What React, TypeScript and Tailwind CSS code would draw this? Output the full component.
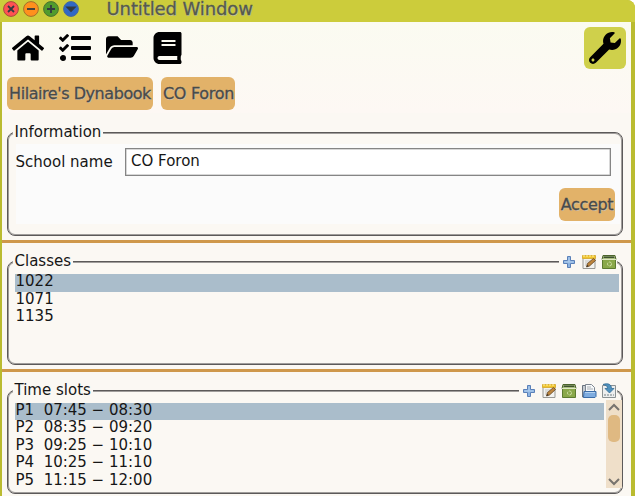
import type { ReactNode } from "react";
import { FaBook, FaFolderOpen, FaHome, FaTasks, FaWrench } from "react-icons/fa";

function Plus() {
  return (
    <svg width="16" height="16" viewBox="0 0 16 16">
      <path d="M6.5 2.5h3v4h4v3h-4v4h-3v-4h-4v-3h4z" fill="#8db4e2" stroke="#5a80b8" />
      <path d="M7.5 3.5h1v4h4v1h-9v-1h4z" fill="#b4cfed" />
    </svg>
  );
}

function Edit() {
  return (
    <svg width="16" height="16" viewBox="0 0 16 16">
      <path d="M2 3h12v11.5H2z" fill="#f3f3f0" stroke="#989893" />
      <path d="M4 7h6M4 9h5M4 11h5" stroke="#c2c3c2" />
      <path d="M1.5 1.5h13v3h-13z" fill="#f1c62f" stroke="#d9b03a" />
      <path d="M3 1v2M6 1v2M9 1v2M12 1v2" stroke="#fff0a1" />
      <path d="M5.500 13l1-3.500 6-5 2 2-6 5.500z" fill="#bd853c" stroke="#654522" strokeWidth=".8" />
      <path d="M5.500 13l1-2 1 1z" fill="#222" />
    </svg>
  );
}

function Bin() {
  return (
    <svg width="16" height="16" viewBox="0 0 16 16">
      <path d="M1.500 5.500h13v9h-13z" fill="#8aa84a" stroke="#5c7a30" />
      <path d="M2 1.500h12l1 4H1z" fill="#a9bd80" stroke="#4c642d" />
      <path d="M3 2.500h10l.5 1.500h-11z" fill="#3f5230" />
      <path d="M1 5.500h14" stroke="#dfe8c4" />
      <circle cx="8.500" cy="10" r="2" fill="none" stroke="#d0dfa8" strokeDasharray="3 1" />
    </svg>
  );
}

function Open() {
  return (
    <svg width="16" height="16" viewBox="0 0 16 16">
      <path d="M1.5 14V2.5h3V5h9v9z" fill="#c7ccd1" stroke="#68727e" />
      <path d="M4.500 1.5h6l3 3V9h-9z" fill="#f7f9fa" stroke="#7e8791" />
      <path d="M6 4h4M6 6h6" stroke="#a9afb5" />
      <path d="M3 8.500h12v5l-1 1H2.500z" fill="#7facdf" stroke="#3b6ca8" />
      <path d="M4 9.500h10" stroke="#b4d2f0" />
    </svg>
  );
}

function Save() {
  return (
    <svg width="16" height="16" viewBox="0 0 16 16">
      <path d="M1.5 2.5h13v12h-13z" fill="#eceeee" stroke="#8a9193" />
      <path d="M3 12h10" stroke="#9ca4a7" strokeWidth="1.5" strokeDasharray="2 1" />
      <path d="M2 1.500c5-2 8.500 0 8.500 4H13L8.500 10 4 5.500h2.500C6.500 3 5 2 2 1.500z" fill="#4f91bd" stroke="#326d98" strokeWidth=".8" />
    </svg>
  );
}

const btn =
  "flex h-[33px] items-center justify-center rounded-md bg-[#e2b269] text-[16px] text-[#484b4a] [-webkit-text-stroke:0.3px_#484b4a] [text-shadow:1px_1px_0_#d3bda0] whitespace-nowrap";

function Group({ title, tools, className, children }: { title: string; tools?: ReactNode; className: string; children: ReactNode }) {
  return (
    <section className={`relative ml-[5px] w-[616px] rounded-lg border border-[#5c5959] shadow-[inset_0_0_0_1px_#a09d9b] ${className}`}>
      <h2 className="absolute -top-[10px] left-[5px] bg-[#fbf8f3] pr-[2px] pl-[1.500px] text-[15px] leading-[18px]">{title}</h2>
      {tools && <div className="absolute -top-[8px] right-[5px] flex gap-1 bg-[#fbf8f3] pl-[2px]">{tools}</div>}
      {children}
    </section>
  );
}

function Rows({ items, className }: { items: string[]; className: string }) {
  return (
    <ul className={`ml-[7px] text-[15px] leading-[17.500px] whitespace-pre ${className}`}>
      {items.map((item, i) => (
        <li key={item} className={`h-[17.500px] pl-[0.500px] ${i === 0 ? "bg-[#aabdcb]" : ""}`}>
          <span className="relative -top-[1px]">{item}</span>
        </li>
      ))}
    </ul>
  );
}

function WindowButton({ color, border, d }: { color: string; border: string; d: string }) {
  return (
    <svg width="16" height="16" viewBox="0 0 16 16">
      <circle cx="8" cy="8" r="7.400" fill={color} stroke={border} />
      <path d={d} stroke="#333a42" strokeWidth="1.800" fill="#263449" />
    </svg>
  );
}

const slots = ["P1  07:45 − 08:30", "P2  08:35 − 09:20", "P3  09:25 − 10:10", "P4  10:25 − 11:10", "P5  11:15 − 12:00"];

export default function App() {
  return (
    <div className="h-[496px] w-[635px] overflow-hidden bg-white font-['DejaVu_Sans',sans-serif] text-[15px] text-[#161616]">
      <div className="flex h-full flex-col overflow-hidden rounded-tr-lg bg-[#babb30]">
        <header className="flex h-[22px] shrink-0 items-start bg-[#cccc3b]">
          <div className="flex gap-1 pt-[1px] pl-[3px]">
            <WindowButton color="#ff5153" border="#a3503a" d="M5 5l6 6M11 5l-6 6" />
            <WindowButton color="#ff901d" border="#a2702c" d="M4 8h8" />
            <WindowButton color="#519b2d" border="#4d7130" d="M4 8h8M8 4v8" />
            <WindowButton color="#3068c5" border="#496999" d="M4.500 6.500h7L8 10z" />
          </div>
          <h1 className="ml-[27.500px] text-[18px] leading-[17px] tracking-[-0.100px] text-[#555a4d] [-webkit-text-stroke:0.3px_#555a4d] [text-shadow:1px_1px_0_#c2c391]">Untitled Window</h1>
        </header>
        <main className="mr-[4px] ml-[2px] flex grow flex-col bg-[#fbf8f3]">
          <div className="h-[91px] shrink-0 bg-linear-to-b from-[#fbfbf1] to-[#fdf8f4]">
            <nav className="flex h-[55px] items-start justify-between pt-[5px] pr-[5px] pl-[10px] text-black">
              <div className="flex pt-[4px]">
                <FaHome className="-mt-[0.500px] h-[34px] w-[32px]" />
                <FaTasks className="mt-[1px] ml-[15px] size-[32px]" />
                <FaFolderOpen className="-mt-[0.500px] ml-[15px] h-[32px] w-[32px]" />
                <FaBook className="mt-[1px] ml-[14px] h-[32px] w-[31px]" />
              </div>
              <button className="flex size-[42px] items-center justify-center rounded-md bg-[#cfd04b]">
                <FaWrench className="size-[32px]" />
              </button>
            </nav>
            <div className="flex gap-2 pl-[5px]">
              <button className={`${btn} w-[146px] tracking-[-0.440px]`}>Hilaire's Dynabook</button>
              <button className={`${btn} w-[74px] pl-[1px] tracking-[-0.280px]`}>CO Foron</button>
            </div>
          </div>
          <Group title="Information" className="mt-[19px] h-[104px]">
            <div className="mt-[11px] ml-[7.500px] h-[80px] w-[604px] bg-[#fbfbfb] pt-[4px]">
              <label className="flex h-[28px] items-center">
                <span className="w-[109.500px]">School name</span>
                <input readOnly defaultValue="CO Foron" className="h-[28px] w-[486px] border border-[#858585] bg-white pb-[2px] pl-[5px] shadow-[inset_0_0_0_0.500px_#b0b0b0] outline-none" />
              </label>
              <button className={`${btn} mt-[12px] ml-[543.500px] w-[56px] tracking-[-0.320px]`}>Accept</button>
            </div>
          </Group>
          <div className="mt-[4px] h-[3px] shrink-0 bg-[#cf984b]" />
          <Group title="Classes" className="mt-[18px] h-[104px]" tools={<><Plus /><Edit /><Bin /></>}>
            <Rows items={["1022", "1071", "1135"]} className="mt-[12px] w-[604px]" />
          </Group>
          <div className="mt-[4px] h-[3px] shrink-0 bg-[#cf984b]" />
          <Group title="Time slots" className="mt-[18px] h-[104px]" tools={<><Plus /><Edit /><Bin /><Open /><Save /></>}>
            <div className="flex pt-[9px]">
              <Rows items={slots} className="mt-[2.600px] w-[589px]" />
              <div className="ml-[2px] flex h-[88px] w-[16px] flex-col items-center bg-[#efdfc9]">
                <svg className="shrink-0" width="14" height="15" viewBox="0 0 14 15"><path d="M2 10l5-5 5 5" fill="none" stroke="#77736e" strokeWidth="2" /></svg>
                <div className="h-[27px] w-[12px] rounded-[5px] bg-[#dfb982]" />
                <svg className="mt-auto" width="14" height="13" viewBox="0 0 14 13"><path d="M2 4l5 5 5-5" fill="none" stroke="#77736e" strokeWidth="2" /></svg>
              </div>
            </div>
          </Group>
        </main>
      </div>
    </div>
  );
}
